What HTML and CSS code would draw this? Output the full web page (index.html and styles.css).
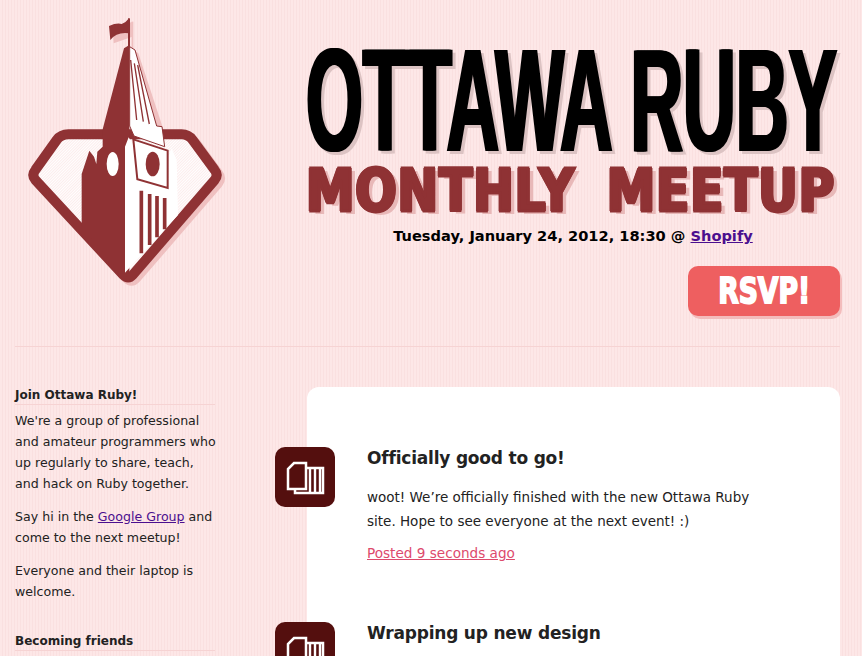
FILE: index.html
```html
<!DOCTYPE html>
<html>

<head>
  <title>Ottawa Ruby</title>
  <link rel="stylesheet" href="styles.css">
</head>

<body class="main">
  <header class="top">
    <svg class="logo" viewBox="0 0 780 900">
      <defs>
        <pattern id="hatch" width="6" height="6" patternUnits="userSpaceOnUse" patternTransform="rotate(45)">
          <rect width="6" height="6" fill="#fff" />
          <rect width="2" height="6" fill="#fbe3e3" />
        </pattern>
      </defs>
      <g transform="translate(10 10)">
        <path class="logo-shadow" d="M205 403 H545 Q565 403 578 420 L644 510 Q656 525 644 540 L398 825 Q385 840 370 825 L106 540 Q94 525 106 510 L170 420 Q183 403 205 403 Z" />
        <polygon class="logo-shade" points="390,140 405,150 480,378 492,440 390,440" />
        <polygon class="logo-shade" points="328,78 387,55 387,100 331,120" />
        <rect class="logo-shade" x="385" y="55" width="5" height="90" />
      </g>
      <path class="logo-frame" d="M205 403 H545 Q565 403 578 420 L644 510 Q656 525 644 540 L398 825 Q385 840 370 825 L106 540 Q94 525 106 510 L170 420 Q183 403 205 403 Z" />
      <path class="logo-dark" d="M327 78 Q350 68 365 72 Q378 68 387 55 L387 100 Q350 95 331 120 Z" />
      <rect class="logo-dark" x="384" y="55" width="6" height="90" />
      <polygon class="logo-dark" points="372,145 388,135 388,820 375,835 245,680 245,522 268,452 282,470 289,492 292,455 308,440 308,388" />
      <ellipse class="logo-white" cx="338" cy="492" rx="18" ry="36" />
      <polygon class="logo-spire" points="389,140 405,150 470,378 486,380 494,440 402,408 389,378" />
      <polygon class="logo-white" points="375,440 386,412 402,440 412,540 505,566 505,470 515,445 530,480 534,645 375,818" />
      <polygon class="logo-clock" points="400,418 503,452 503,564 412,538" />
      <ellipse class="logo-dark" cx="458" cy="492" rx="21" ry="37" />
      <path class="logo-lines" d="M392 180 L410 360 M403 190 L430 365 M413 195 L448 372" />
      <path class="logo-bars" d="M424 572 V760 M449 582 V735 M471 588 V712 M494 594 V688" />
    </svg>

    <div class="event">
      <h1 class="title">OTTAWA RUBY</h1>
      <h2 class="subtitle">MONTHLY MEETUP</h2>
      <p class="when">Tuesday, January 24, 2012, 18:30 @ <a href="#">Shopify</a></p>
      <a class="rsvp" href="#"><span>RSVP!</span></a>
    </div>
  </header>

  <div class="columns">
    <aside class="side">
      <h3>Join Ottawa Ruby!</h3>
      <p>We're a group of professional and amateur programmers who up regularly to share, teach, and hack on Ruby together.</p>
      <p>Say hi in the <a href="#">Google Group</a> and come to the next meetup!</p>
      <p>Everyone and their laptop is welcome.</p>
      <h3 class="next">Becoming friends</h3>
    </aside>

    <main class="posts">
      <article class="post">
        <span class="badge">
          <svg viewBox="0 0 60 60"><path class="page" d="M20 21 H48 V46 H20 Z" /><path class="bars" d="M35 22 V45 M40 22 V45 M45 22 V45" /><path class="page" d="M19 16 H31 V42 H13 V22 Z" /></svg>
        </span>
        <h2>Officially good to go!</h2>
        <p>woot! We’re officially finished with the new Ottawa Ruby site. Hope to see everyone at the next event! :)</p>
        <a class="posted" href="#">Posted 9 seconds ago</a>
      </article>
      <article class="post">
        <span class="badge">
          <svg viewBox="0 0 60 60"><path class="page" d="M20 21 H48 V46 H20 Z" /><path class="bars" d="M35 22 V45 M40 22 V45 M45 22 V45" /><path class="page" d="M19 16 H31 V42 H13 V22 Z" /></svg>
        </span>
        <h2>Wrapping up new design</h2>
      </article>
    </main>
  </div>
</body>

</html>
```

FILE: styles.css
```css
html {
  height: 100%;
  overflow: hidden;
}

.main {
  margin: 0;
  height: 656px;
  overflow: hidden;
  background: repeating-linear-gradient(90deg, #fde7e7 0, #fde7e7 2px, #fae0e0 2px, #fae0e0 3px);
  font-family: "DejaVu Sans", sans-serif;
  font-size: 12.6px;
  line-height: 21px;
  color: #222;
}

a {
  color: #4b0f8f;
}

.top {
  display: flex;
  margin: 0 22px 0 15px;
  height: 346px;
  border-bottom: 1px solid #f6d3d3;
}

.logo {
  width: 260px;
  height: 300px;
  margin-left: -15px;
  flex: none;
}

.logo-shadow {
  fill: #efc0c0;
  stroke: #efc0c0;
  stroke-width: 30;
}

.logo-shade {
  fill: #efc0c0;
}

.logo-frame {
  fill: url(#hatch);
  stroke: #8f3234;
  stroke-width: 30;
}

.logo-dark {
  fill: #8f3234;
}

.logo-white {
  fill: #fff;
}

.logo-spire {
  fill: #fff;
  stroke: #8f3234;
  stroke-width: 3;
}

.logo-clock {
  fill: #fff;
  stroke: #8f3234;
  stroke-width: 6;
}

.logo-lines,
.logo-bars {
  fill: none;
  stroke: #8f3234;
  stroke-width: 4;
}

.logo-bars {
  stroke-width: 11;
}

.event {
  flex: 1;
  min-width: 0;
  margin-left: 46px;
  display: flex;
  flex-direction: column;
}

.title {
  margin: 41px 0 0;
  height: 119px;
  font-family: "Liberation Sans", sans-serif;
  font-size: 146px;
  line-height: 119px;
  font-weight: bold;
  white-space: nowrap;
  color: #000;
  text-shadow: -3px 0 0 #000, 3px 0 0 #000,
    9px 3px 0 #dcc3c3, 3px 3px 0 #dcc3c3;
  transform: scaleX(0.5);
  transform-origin: left center;
}

.subtitle {
  margin: 5px 0 0;
  height: 52px;
  font-family: "DejaVu Sans", sans-serif;
  font-size: 59px;
  line-height: 52px;
  font-weight: bold;
  letter-spacing: 1px;
  word-spacing: 17px;
  white-space: nowrap;
  color: #8f3234;
  -webkit-text-stroke: 3px #8f3234;
  text-shadow: -2px 0 0 #8f3234, 2px 0 0 #8f3234, 6px 3px 0 #e8b8b8;
  transform: scaleX(0.825);
  transform-origin: left center;
}

.when {
  margin: 8px 0 0;
  text-align: center;
  font-size: 14.6px;
  font-weight: bold;
  color: #000;
}

.rsvp {
  align-self: flex-end;
  width: 152px;
  height: 50px;
  margin-top: 20px;
  border-radius: 10px;
  background: #ee5f60;
  box-shadow: 2px 3px 0 #f3bcbc;
  color: #fff;
  font-size: 36px;
  font-weight: bold;
  line-height: 50px;
  text-align: center;
  text-decoration: none;
  -webkit-text-stroke: 2px #fff;
}

.rsvp span {
  display: inline-block;
  transform: scaleX(0.74);
}

.columns {
  display: flex;
  margin: 0 22px 0 15px;
}

.side {
  width: 200px;
  margin-top: 40px;
  flex: none;
}

.side h3 {
  margin: 0 0 5px;
  font-size: 12px;
  line-height: 17px;
  border-bottom: 1px solid #f6d3d3;
  color: #222;
}

.side p {
  margin: 0 -6px 12px 0;
}

.side .next {
  margin-top: 31px;
}

.posts {
  flex: 1;
  min-width: 0;
  margin: 40px 0 0 92px;
  padding: 60px 60px 0;
  background: #fff;
  border-radius: 12px 12px 0 0;
  height: 400px;
}

.post {
  position: relative;
  display: flow-root;
  height: 175px;
}

.post h2 {
  margin: 0 0 16px;
  font-size: 17px;
  line-height: 22px;
  letter-spacing: -0.2px;
  color: #222;
}

.post p {
  margin: 0 0 10px;
  font-size: 13.5px;
  line-height: 24px;
  color: #222;
}

.posted {
  font-size: 13.6px;
  color: #dd4a6c;
}

.badge {
  position: absolute;
  left: -92px;
  top: 0;
  width: 60px;
  height: 60px;
  border-radius: 10px;
  background: #540f0e;
}

.badge svg {
  display: block;
  width: 60px;
  height: 60px;
}

.page {
  fill: #540f0e;
  stroke: #fff;
  stroke-width: 2.5;
}

.bars {
  fill: none;
  stroke: #fff;
  stroke-width: 2.4;
}
```
